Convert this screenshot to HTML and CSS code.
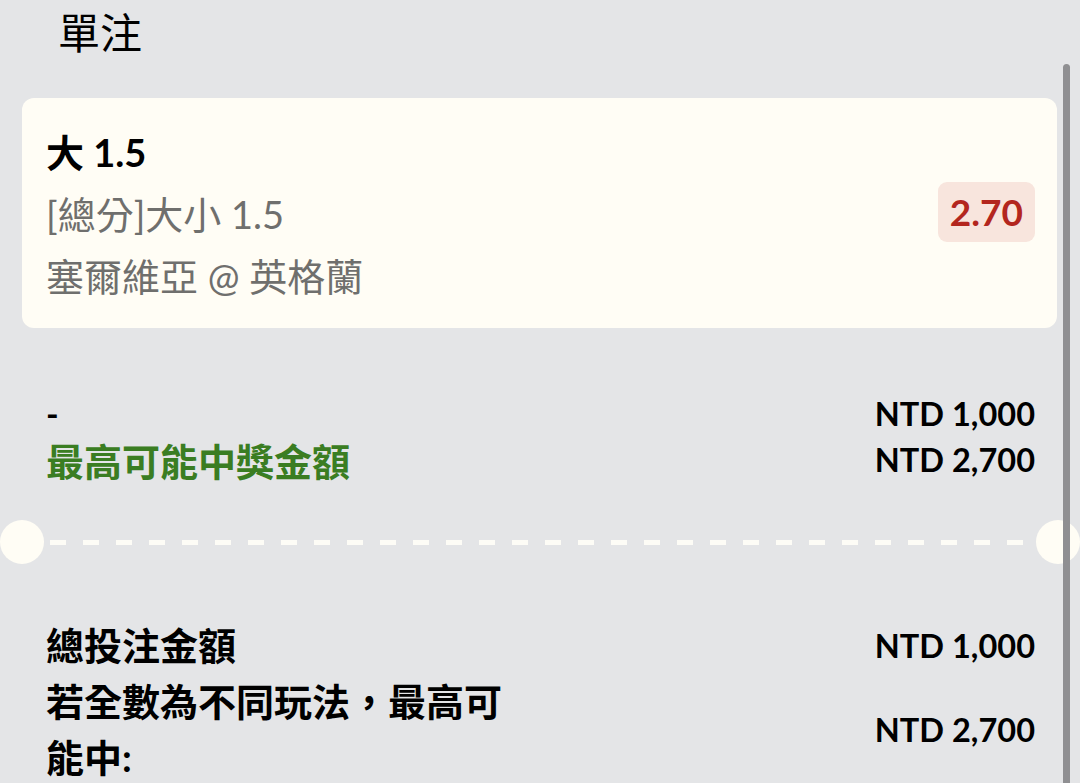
FILE: index.html
```html
<!DOCTYPE html>
<html lang="zh-Hant">
<head>
<meta charset="utf-8">
<title>單注</title>
<link rel="stylesheet" href="styles.css">
</head>
<body>
<div class="page">
  <h1 class="title">單注</h1>
  <div class="card">
    <div class="card-info">
      <div class="sel">大 1.5</div>
      <div class="sub">[總分]大小 1.5</div>
      <div class="sub">塞爾維亞 @ 英格蘭</div>
    </div>
    <div class="odds">2.70</div>
  </div>

  <div class="rows">
    <div class="row">
      <div class="dash-label">-</div>
      <div class="amount">NTD 1,000</div>
    </div>
    <div class="row">
      <div class="win-label">最高可能中獎金額</div>
      <div class="amount">NTD 2,700</div>
    </div>
  </div>

  <div class="divider">
    <span class="notch"></span>
    <span class="dashes"></span>
    <span class="notch"></span>
  </div>

  <div class="summary">
    <div class="srow">
      <div class="slabel">總投注金額</div>
      <div class="amount">NTD 1,000</div>
    </div>
    <div class="srow">
      <div class="slabel">若全數為不同玩法，最高可能中:</div>
      <div class="amount">NTD 2,700</div>
    </div>
  </div>
</div>
<div class="scrollbar"></div>
</body>
</html>
```
FILE: styles.css
```css
html, body {
  margin: 0;
  padding: 0;
}
body {
  background: #e4e5e7;
  font-family: Lato, "Noto Sans CJK TC", sans-serif;
  color: #000;
  height: 783px;
  overflow: hidden;
  position: relative;
}
.page {
  padding: 0 23px 0 22px;
}
.title {
  margin: 0;
  padding: 6px 0 0 36px;
  font-size: 42px;
  line-height: 50px;
  font-weight: 400;
  font-family: "Noto Sans CJK TC", sans-serif;
}
.card {
  margin-top: 42px;
  background: #fffdf5;
  border-radius: 12px;
  height: 230px;
  box-sizing: border-box;
  padding: 22px 22px 20px 24px;
  display: flex;
  justify-content: space-between;
  align-items: center;
}
.card-info {
  display: flex;
  flex-direction: column;
}
.sel {
  font-size: 38px;
  line-height: 62px;
  font-weight: 700;
}
.sub {
  font-size: 38px;
  line-height: 62px;
  color: #6f6f6d;
}
.odds {
  background: #f8e5dd;
  color: #b3261e;
  border-radius: 9px;
  font-size: 37px;
  font-weight: 700;
  line-height: 60px;
  padding: 0 12px;
  margin-bottom: 4px;
}
.rows {
  margin-top: 62px;
  padding: 0 22px 0 24px;
}
.row {
  display: flex;
  justify-content: space-between;
  align-items: center;
  height: 46px;
}
.dash-label {
  font-size: 34px;
  font-weight: 700;
}
.win-label {
  font-size: 38px;
  font-weight: 700;
  color: #3a7d22;
}
.amount {
  font-size: 32.5px;
  font-weight: 700;
  white-space: nowrap;
}
.divider {
  margin: 38px -23px 0 -22px;
  display: flex;
  align-items: center;
  gap: 6px;
}
.notch {
  width: 44px;
  height: 44px;
  border-radius: 50%;
  background: #fffdf5;
  flex: none;
}
.dashes {
  flex: 1;
  height: 5px;
  background: repeating-linear-gradient(to right, #fdfcf6 0 16px, transparent 16px 33px);
}
.summary {
  margin-top: 53px;
  padding: 0 22px 0 24px;
}
.srow {
  display: flex;
  justify-content: space-between;
  align-items: center;
}
.slabel {
  font-size: 38px;
  line-height: 56px;
  font-weight: 700;
  max-width: 470px;
}
.scrollbar {
  position: absolute;
  top: 64px;
  left: 1063px;
  width: 7px;
  height: 760px;
  border-radius: 4px;
  background: #8f8f92;
}
```
